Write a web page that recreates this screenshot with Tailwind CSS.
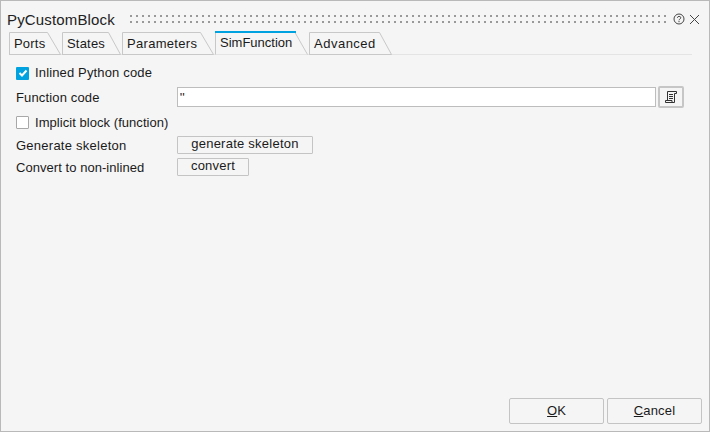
<!DOCTYPE html>
<html lang="en">
<head>
    <meta charset="UTF-8">
    <title>PyCustomBlock</title>
    <script src="https://cdn.jsdelivr.net/npm/@tailwindcss/browser@4"></script>
</head>
<body class="bg-[#f5f5f5] font-['Liberation_Sans',Arial,sans-serif] text-[13px] leading-[16px] text-[#1a1a1a]">
<div class="w-[710px] h-[432px] border border-[#b9b9b9] flex flex-col overflow-hidden">

    <!-- title bar -->
    <div class="h-[30px] flex items-center pl-[6px] pr-[9px] pt-[6px]">
        <span class="text-[15px] tracking-[0.15px] w-[123px] mt-[2px] text-[#222]">PyCustomBlock</span>
        <svg class="w-[538px] h-[8px]" viewBox="0 0 538 8">
            <defs>
                <pattern id="grip" width="6" height="6" patternUnits="userSpaceOnUse">
                    <rect width="2" height="2" fill="#999999"/>
                </pattern>
            </defs>
            <rect width="538" height="8" fill="url(#grip)"/>
        </svg>
        <svg class="ml-[5px] w-[12px] h-[12px]" viewBox="0 0 12 12" fill="none" stroke="#444">
            <circle cx="6" cy="6" r="5"/>
            <path d="M4.3 4.8c.2-1.9 3.5-1.9 3.5 0 0 1.2-1.8 1.2-1.8 2.5M6 8v1.2"/>
        </svg>
        <svg class="ml-[4px] w-[11px] h-[11px]" viewBox="0 0 11 11" fill="none" stroke="#444">
            <path d="M1 1l9 9M10 1l-9 9"/>
        </svg>
    </div>

    <!-- tabs -->
    <div class="h-[24px] ml-[8px] mr-[17px] flex items-end border-b border-[#e4e4e4]">
        <div class="relative w-[53px] h-[23px] pl-[5px] pt-[4px] -mb-px">
            <svg class="absolute left-0 top-0" width="53" height="23" fill="none" stroke="#c8c8c8"><path d="M.5 23V.5H38.5L51.5 22.5H.5"/></svg>
            <span class="relative tracking-[0.2px]">Ports</span>
        </div>
        <div class="relative w-[60px] h-[23px] pl-[5px] pt-[4px] -mb-px">
            <svg class="absolute left-0 top-0" width="60" height="23" fill="none" stroke="#c8c8c8"><path d="M.5 23V.5H46.5L58.5 22.5H.5"/></svg>
            <span class="relative tracking-[0.2px]">States</span>
        </div>
        <div class="relative w-[93px] h-[23px] pl-[5px] pt-[4px] -mb-px">
            <svg class="absolute left-0 top-0" width="93" height="23" fill="none" stroke="#c8c8c8"><path d="M.5 23V.5H78.5L91.5 22.5H.5"/></svg>
            <span class="relative tracking-[0.3px]">Parameters</span>
        </div>
        <div class="relative w-[94px] h-[24px] pl-[5px] pt-[4px] -mb-px">
            <svg class="absolute left-0 top-0" width="94" height="24" fill="none" stroke="#c8c8c8"><path d="M.5 23.5V1.5H80L92.5 23.5"/><path d="M0 1H81" stroke="#00a3e0" stroke-width="2"/></svg>
            <span class="relative">SimFunction</span>
        </div>
        <div class="relative w-[83px] h-[23px] pl-[5px] pt-[4px] -mb-px">
            <svg class="absolute left-0 top-0" width="83" height="23" fill="none" stroke="#c8c8c8"><path d="M.5 23V.5H70.5L82.5 22.5H.5"/></svg>
            <span class="relative tracking-[0.5px]">Advanced</span>
        </div>
    </div>

    <!-- form -->
    <div class="flex-1 flex flex-col pl-[15px] pr-[25px] pt-[10px]">
        <label class="h-[16px] flex items-center gap-[6px] tracking-[0.15px]">
            <span class="w-[13px] h-[13px] rounded-[1px] bg-[#00a3e0] flex items-center justify-center">
                <svg width="10" height="10" viewBox="0 0 10 10" fill="none" stroke="#fff" stroke-width="2"><path d="M1.5 5l2.5 2.5 4.5-5"/></svg>
            </span>
            Inlined Python code
        </label>

        <div class="mt-[5px] h-[22px] flex items-center">
            <span class="w-[161px] pt-[2px] tracking-[0.15px]">Function code</span>
            <div class="w-[480px] h-[20px] bg-white border border-[#bdbdbd] px-[2px] text-left leading-[20px]">''</div>
            <button class="ml-[2px] w-[26px] h-[22px] border-2 border-[#c6c6c6] rounded-[2px] flex items-center justify-center">
                <svg width="14" height="14" viewBox="0 0 14 14" fill="none" stroke="#333">
                    <path d="M3.5 10.5V1.5H12.5V3.5H10.5V12.5H1.5V10.5H8V12.5M5 4.5H9M5 6.5H9M5 8.5H9"/>
                </svg>
            </button>
        </div>

        <label class="mt-[6px] h-[16px] flex items-center gap-[6px] tracking-[0.05px]">
            <span class="w-[13px] h-[13px] rounded-[1px] bg-white border border-[#a8a8a8]"></span>
            <span class="pt-[2px]">Implicit block (function)</span>
        </label>

        <div class="mt-[5px] h-[20px] flex items-center">
            <span class="w-[161px] pt-[2px] tracking-[0.25px]">Generate skeleton</span>
            <button class="w-[136px] h-[18px] border border-[#c4c4c4] rounded-[1px] pb-[2px] leading-[14px] tracking-[0.25px]">generate skeleton</button>
        </div>

        <div class="mt-[2px] h-[20px] flex items-center">
            <span class="w-[161px] pt-[2px] tracking-[0.05px]">Convert to non-inlined</span>
            <button class="w-[72px] h-[18px] border border-[#c4c4c4] rounded-[1px] pb-[2px] leading-[14px] tracking-[0.2px]">convert</button>
        </div>

        <!-- footer -->
        <div class="mt-auto mb-[7px] flex justify-end gap-[3px] -mr-[18px]">
            <button class="w-[95px] h-[26px] border border-[#c4c4c4] rounded-[2px]"><span class="underline">O</span>K</button>
            <button class="w-[95px] h-[26px] border border-[#c4c4c4] rounded-[2px] tracking-[0.15px]"><span class="underline">C</span>ancel</button>
        </div>
    </div>
</div>
</body>
</html>
